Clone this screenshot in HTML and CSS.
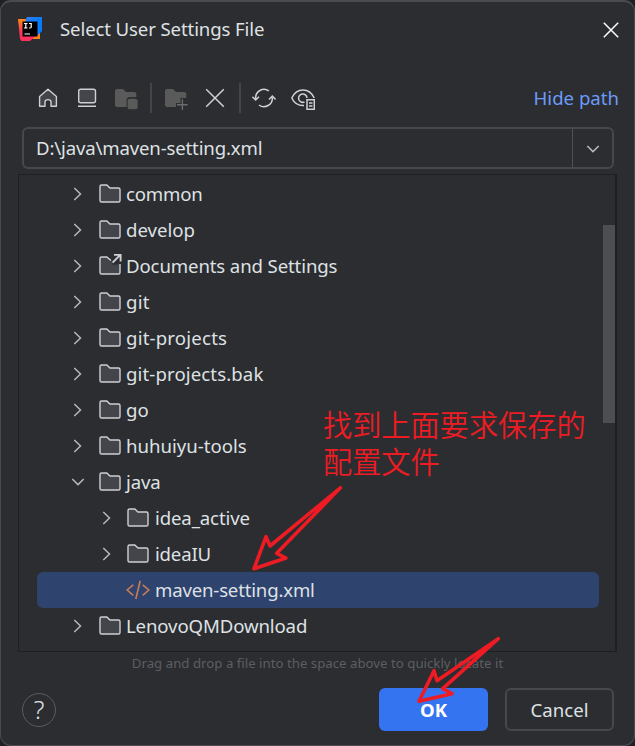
FILE: index.html
```html
<!DOCTYPE html>
<html lang="en">
<head>
<meta charset="utf-8">
<title>Select User Settings File</title>
<link rel="stylesheet" href="styles.css">
</head>
<body>
<svg class="defs" width="0" height="0" aria-hidden="true">
  <symbol id="folder" viewBox="0 0 24 24"><path d="M2 4.6Q2 3 3.6 3H8.8L12 6H20.4Q22 6 22 7.6V18.4Q22 20 20.4 20H3.6Q2 20 2 18.4Z" fill="#43454a" stroke="#ced0d6" stroke-width="1.4"/></symbol>
  <symbol id="link" viewBox="0 0 24 24"><path d="M13 6.5L8.8 3H3.6Q2 3 2 4.6V18.4Q2 20 3.6 20H20.4Q22 20 22 18.4V10L15 11Z" fill="#43454a"/><path d="M13 6.5L8.8 3H3.6Q2 3 2 4.6V18.4Q2 20 3.6 20H20.4Q22 20 22 18.4V10" fill="none" stroke="#ced0d6" stroke-width="1.4"/><path d="M14.6 8.6L22 1.2M16 .9H22.6V7.4" fill="none" stroke="#ced0d6" stroke-width="1.9"/></symbol>
  <symbol id="right" viewBox="0 0 24 24"><path d="M8.3 6L14.5 12L8.3 18" fill="none" stroke="#b4b8bf" stroke-width="1.5"/></symbol>
  <symbol id="down" viewBox="0 0 24 24"><path d="M6.3 9L12 14.6L17.7 9" fill="none" stroke="#b4b8bf" stroke-width="1.5"/></symbol>
  <symbol id="xml" viewBox="0 0 24 24"><path d="M7.3 6.8L1.2 12L7.3 17.4M16.7 6.8L22.8 12L16.7 17.4M14.2 2.8L9.8 21" fill="none" stroke="#c77d55" stroke-width="1.6"/></symbol>
</svg>
<main class="dialog">
  <header class="titlebar">
    <svg class="logo" viewBox="0 0 24 24">
      <defs>
        <linearGradient id="warm" x2="0" y2="1"><stop offset="0" stop-color="#ff8a16"/><stop offset=".6" stop-color="#fe315d"/></linearGradient>
        <linearGradient id="cool" x2=".4" y2="1"><stop offset="0" stop-color="#3d7bf0"/><stop offset=".4" stop-color="#087cfa"/></linearGradient>
      </defs>
      <path d="M16 18L22 14V22H14Z" fill="#fc801d"/><path d="M0 2H9V17H20L12 24H3.5L2 22Z" fill="url(#warm)"/><path d="M9 0H24V14L20 18H7.5V3Z" fill="url(#cool)"/><rect x="4.5" y="4.5" width="15" height="15"/>
      <path d="M6 6.5H9.5M7.8 6.5V11M6 11H9.5M11 6.5H13.2V10.2Q13.2 11 11.5 11H11M6.5 17H12" fill="none" stroke="#fff" stroke-width="1.2"/>
    </svg>
    <h1 class="title">Select User Settings File</h1>
    <svg class="close" viewBox="0 0 16 16"><path d="M.8 .8L15.2 15.2M15.2 .8L.8 15.2" stroke="#fff" stroke-width="1.5"/></svg>
  </header>
  <nav class="toolbar">
    <svg class="tool home" viewBox="0 0 24 24"><path d="M3.6 10.5L12 3.2L20.4 10.5V20.2H15V16Q15 13.6 12 13.6T9 16V20.2H3.6Z" fill="#43454a" stroke="#ced0d6" stroke-width="1.4" stroke-linejoin="round"/></svg>
    <svg class="tool desk" viewBox="0 0 24 24"><rect x="3.7" y="3.2" width="16.8" height="13.6" rx="2" fill="#43454a" stroke="#ced0d6" stroke-width="1.4"/><path d="M3 20.2H21" stroke="#ced0d6" stroke-width="1.5"/></svg>
    <svg class="tool proj" viewBox="0 0 24 24"><path d="M1 5Q1 3 3 3H9L12 6H20Q22.3 6 22.3 8V11H16Q12.5 11 12.5 15V21H3Q1 21 1 19Z" fill="#5a5a5a"/><rect x="13.6" y="12.7" width="10" height="10.6" rx="2.6" fill="#5a5a5a"/></svg>
    <i class="divider"></i>
    <svg class="tool newf" viewBox="0 0 24 24"><path d="M1 5Q1 3 3 3H9L12 6H20Q22.3 6 22.3 8V12H16.5V17H12V21H3Q1 21 1 19Z" fill="#5a5a5a"/><path d="M13 18.7H23.6M18.4 13.3V24" stroke="#6a6b6d" stroke-width="1.4"/></svg>
    <svg class="tool del" viewBox="0 0 24 24"><path d="M3.2 3.2L20.8 20.8M20.8 3.2L3.2 20.8" stroke="#ced0d6" stroke-width="1.5"/></svg>
    <i class="divider second"></i>
    <svg class="tool sync" viewBox="0 0 24 24"><path d="M17 5A8.4 8.4 0 0 0 3.7 12.6M.4 10.8L3.7 14L7 10.8M7 19A8.4 8.4 0 0 0 20.3 11.4M17 13.4L20.3 10L23.6 13.4" fill="none" stroke="#ced0d6" stroke-width="1.5"/></svg>
    <svg class="tool eye" viewBox="0 0 24 24"><path d="M13 19.5Q4.5 20 .8 12Q4.5 4 12 4T23.2 12M13.5 16A4.2 4.2 0 1 1 16 12" fill="none" stroke="#ced0d6" stroke-width="1.5"/><path d="M16 13.8H23.3V23.3H16ZM18 16.9H21.5M18 20H21.5" fill="#2b2d30" stroke="#ced0d6" stroke-width="1.5"/></svg>
    <a class="hide">Hide path</a>
  </nav>
  <div class="field"><span class="path">D:\java\maven-setting.xml</span><span class="drop"><svg class="ic" viewBox="0 0 24 24"><use href="#down"/></svg></span></div>
  <section class="tree">
    <div class="row"><svg class="ic"><use href="#right"/></svg><svg class="ic file"><use href="#folder"/></svg><span class="tighter">common</span></div>
    <div class="row"><svg class="ic"><use href="#right"/></svg><svg class="ic file"><use href="#folder"/></svg><span>develop</span></div>
    <div class="row"><svg class="ic"><use href="#right"/></svg><svg class="ic file"><use href="#link"/></svg><span class="tight">Documents and Settings</span></div>
    <div class="row"><svg class="ic"><use href="#right"/></svg><svg class="ic file"><use href="#folder"/></svg><span class="loose">git</span></div>
    <div class="row"><svg class="ic"><use href="#right"/></svg><svg class="ic file"><use href="#folder"/></svg><span class="loose">git-projects</span></div>
    <div class="row"><svg class="ic"><use href="#right"/></svg><svg class="ic file"><use href="#folder"/></svg><span class="wide">git-projects.bak</span></div>
    <div class="row"><svg class="ic"><use href="#right"/></svg><svg class="ic file"><use href="#folder"/></svg><span>go</span></div>
    <div class="row"><svg class="ic"><use href="#right"/></svg><svg class="ic file"><use href="#folder"/></svg><span>huhuiyu-tools</span></div>
    <div class="row"><svg class="ic"><use href="#down"/></svg><svg class="ic file"><use href="#folder"/></svg><span class="tight">java</span></div>
    <div class="row child"><svg class="ic"><use href="#right"/></svg><svg class="ic file"><use href="#folder"/></svg><span class="tight">idea_active</span></div>
    <div class="row child"><svg class="ic"><use href="#right"/></svg><svg class="ic file"><use href="#folder"/></svg><span class="tighter">ideaIU</span></div>
    <div class="row child selected"><i class="ic"></i><svg class="ic file"><use href="#xml"/></svg><span class="tighter">maven-setting.xml</span></div>
    <div class="row"><svg class="ic"><use href="#right"/></svg><svg class="ic file"><use href="#folder"/></svg><span class="tight">LenovoQMDownload</span></div>
    <i class="thumb"></i>
  </section>
  <p class="hint">Drag and drop a file into the space above to quickly locate it</p>
  <footer class="actions">
    <span class="help">?</span>
    <button class="btn ok">OK</button>
    <button class="btn cancel">Cancel</button>
  </footer>
  <p class="note">找到上面要求保存的<br>配置文件</p>
  <svg class="arrows" viewBox="0 0 635 746"><path d="M254 568.7L266 536.7L270 546L340.4 487.8L276.7 553.3L286 558ZM419 701.3L434 670.7L437 680.7L498.3 638.7L442.7 688.7L452 693.7Z"/></svg>
</main>
</body>
</html>
```
FILE: styles.css
```css
* { box-sizing: border-box; }
body { margin: 0; background: #202124; color: #dfe1e5; font: 18.6px/36px "Noto Sans", "Noto Sans CJK SC", sans-serif; }
.defs { position: absolute; }
.dialog { position: relative; width: 635px; height: 746px; background: #2b2d30; border: 1px solid #4a4b4e; border-top-width: 2px; border-radius: 11px; overflow: hidden; display: flex; flex-direction: column; white-space: nowrap; }
.titlebar { height: 70px; padding: 15px 15px 0 17px; display: flex; align-items: flex-start; }
.logo { width: 24px; height: 24px; }
.title { margin: -6px auto 0 18px; font-size: 18.6px; font-weight: 400; letter-spacing: -.12px; }
.close { width: 16px; height: 16px; margin-top: 5px; }
.toolbar { height: 52px; padding: 0 15px 0 35px; display: flex; align-items: center; }
.tool { width: 24px; height: 24px; flex: none; }
.desk { margin-left: 15px; }
.proj { margin-left: 15px; }
.divider { width: 2px; height: 30px; margin: 0 12px; background: #43454a; }
.del { margin-left: 15px; }
.second { margin-right: 11px; }
.eye { margin-left: 15px; }
.hide { margin-left: auto; color: #6b9bfa; }
.field { height: 42px; margin: 3px 20px 0 21px; border: 2px solid #46484d; border-radius: 6px; display: flex; align-items: center; justify-content: space-between; padding-left: 12px; }
.path { letter-spacing: -.16px; }
.drop { width: 40px; height: 100%; border-left: 1px solid #4e5157; display: flex; align-items: center; justify-content: center; padding-top: 2px; }
.ic { width: 24px; height: 24px; flex: none; }
.tree { position: relative; height: 478px; flex: none; margin: 5px 17px 0; border: 1px solid #1e1f22; border-right-width: 2px; padding-top: 1px; }
.row { height: 36px; display: flex; align-items: center; margin: 0 16px 0 18px; padding-left: 29px; border-radius: 6px; }
.file { margin: 0 4px 0 8px; }
.child { padding-left: 58px; }
.child .file { margin-left: 7px; margin-right: 5px; }
.selected { background: #2e436e; }
.tight { letter-spacing: -.12px; }
.tighter { letter-spacing: -.18px; }
.loose { letter-spacing: .2px; }
.wide { letter-spacing: .12px; }
.thumb { position: absolute; right: 0; top: 50px; width: 12px; height: 198px; background: #4d4e51; }
.hint { margin: 0; height: 22px; font-size: 13.25px; line-height: 22px; color: #5c5e62; text-align: center; }
.actions { display: flex; align-items: center; height: 43px; margin: 14px 20px 0 21px; gap: 17px; }
.help { width: 34px; height: 34px; margin-right: auto; border: 1px solid #5a5c60; border-radius: 50%; font-size: 25px; font-weight: 300; line-height: 31px; text-align: center; }
.btn { width: 109px; height: 43px; border: 0; border-radius: 6px; padding: 0; font: inherit; color: inherit; }
.ok { background: #3574f0; color: #fff; font-weight: 700; }
.cancel { background: none; border: 2px solid #46484d; }
.note { position: absolute; left: 322px; top: 403px; margin: 0; color: #ed1c24; font: 350 29.2px/37px "Noto Sans CJK SC", sans-serif; }
.arrows { position: absolute; left: -1px; top: -2px; width: 635px; height: 746px; fill: none; stroke: #ed1c24; stroke-width: 3.6; stroke-linejoin: round; }
```
